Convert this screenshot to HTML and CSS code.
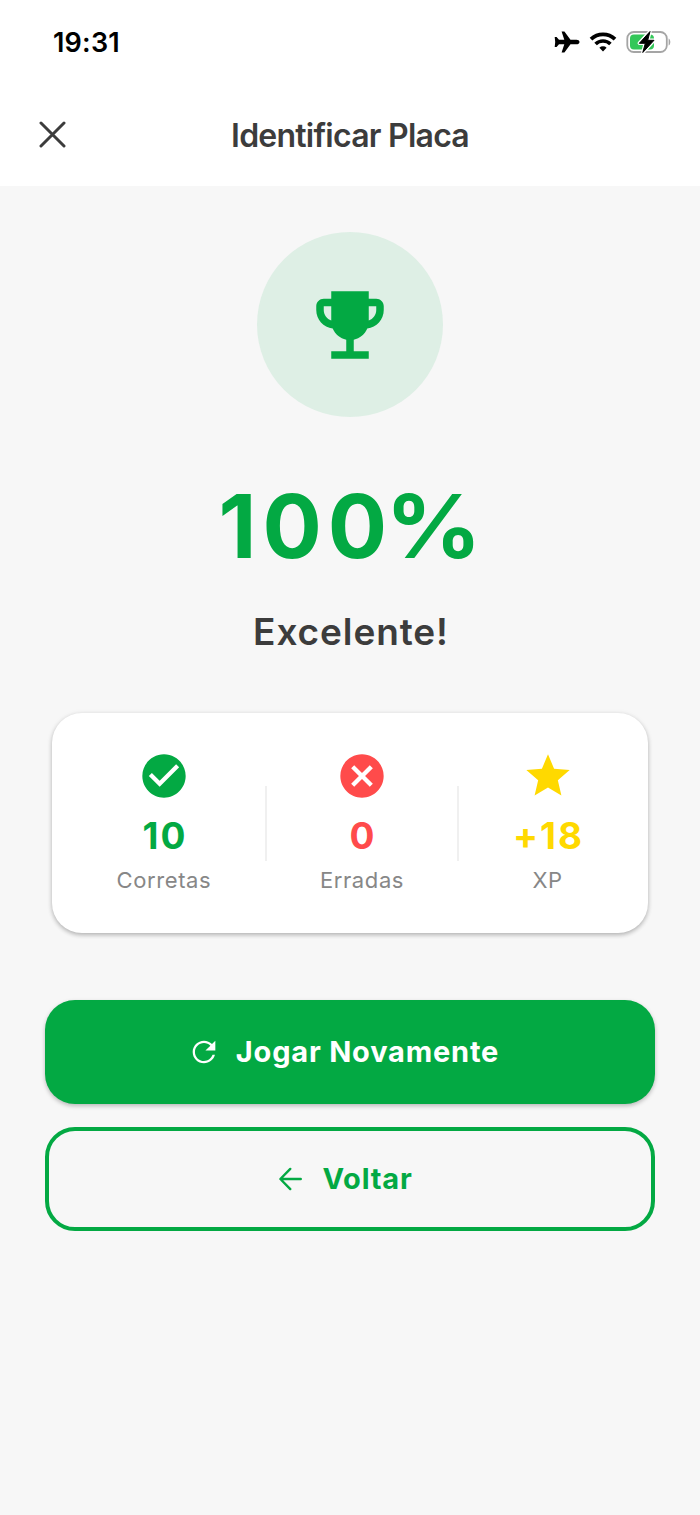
FILE: index.html
```html
<!DOCTYPE html>
<html lang="pt-BR">
<head>
    <meta charset="UTF-8">
    <meta name="viewport" content="width=device-width, initial-scale=1.0">
    <title>Identificar Placa</title>
    <link rel="stylesheet" href="styles.css">
</head>
<body>
    <div class="status-bar">
        <span class="time">19:31</span>
        <div class="status-icons">
            <svg width="26" height="24" viewBox="0 0 26 24">
                <path d="M25.500 12c0-1.400-1.500-2.300-3-2.300h-6L10.400 1.500H7.600L10.300 9.700H5L2.600 7H.7L1.200 12 .7 17h1.900L5 14.300h5.300L7.600 22.500h2.800l6.100-8.200h6c1.500 0 3-.9 3-2.300z"/>
            </svg>
            <svg width="28" height="20" viewBox="0 0 28 20" fill="none" stroke="#000">
                <path d="M2 7.200a17.200 17.200 0 0 1 24 0" stroke-width="3.800"/>
                <path d="M6.600 12a10.600 10.600 0 0 1 14.800 0" stroke-width="3.600"/>
                <path d="M14 19.500l-3.600-3.700a5.200 5.200 0 0 1 7.200 0z" fill="#000" stroke="none"/>
            </svg>
            <svg width="46" height="26" viewBox="0 0 46 26">
                <rect x="1.300" y="3" width="39.500" height="20" rx="6.500" fill="#fff" stroke="#a5a5a5" stroke-width="1.800"/>
                <path d="M42.600 9.500c2.300 1 2.300 6 0 7z" fill="#a5a5a5"/>
                <rect x="4" y="5.600" width="24" height="14.800" rx="4" fill="#34c759"/>
                <path d="M24 2.500L13.300 14.300h6L16.800 23.500 28 11.300h-6.300z" stroke="#fff" stroke-width="3.500" stroke-linejoin="round"/>
                <path d="M24 2.500L13.300 14.300h6L16.800 23.500 28 11.300h-6.300z" stroke="#000" stroke-linejoin="round"/>
            </svg>
        </div>
    </div>

    <header class="header">
        <svg class="close" width="28" height="28" viewBox="0 0 28 28">
            <path d="M3 2l23 23M26 2L3 25"/>
        </svg>
        <h1>Identificar Placa</h1>
    </header>

    <main class="result">
        <div class="trophy">
            <svg width="90" height="90" viewBox="0 0 24 24">
                <path d="M19 5h-2V3H7v2H5c-1.100 0-2 .9-2 2v1c0 2.550 1.920 4.630 4.390 4.940.63 1.500 1.980 2.630 3.610 2.960V19H7v2h10v-2h-4v-3.100c1.630-.33 2.980-1.460 3.610-2.960C19.080 12.630 21 10.550 21 8V7c0-1.100-.9-2-2-2zM5 8V7h2v3.820C5.840 10.400 5 9.300 5 8zm14 0c0 1.300-.84 2.400-2 2.820V7h2v1z"/>
            </svg>
        </div>
        <div class="percent">100<span class="sign">%</span></div>
        <div class="message">Excelente!</div>

        <div class="card">
            <div class="stat correct">
                <svg width="52" height="52" viewBox="0 0 24 24">
                    <path d="M12 2C6.480 2 2 6.480 2 12s4.480 10 10 10 10-4.480 10-10S17.520 2 12 2zm-2 15l-5-5 1.410-1.410L10 14.170l7.590-7.590L19 8l-9 9z"/>
                </svg>
                <span class="value">10</span>
                <span class="label">Corretas</span>
            </div>
            <div class="divider"></div>
            <div class="stat wrong">
                <svg width="52" height="52" viewBox="0 0 24 24">
                    <path d="M12 2C6.470 2 2 6.470 2 12s4.470 10 10 10 10-4.470 10-10S17.530 2 12 2zm5 13.590L15.590 17 12 13.410 8.410 17 7 15.590 10.590 12 7 8.410 8.410 7 12 10.590 15.590 7 17 8.410 13.410 12 17 15.590z"/>
                </svg>
                <span class="value">0</span>
                <span class="label">Erradas</span>
            </div>
            <div class="divider"></div>
            <div class="stat xp">
                <svg width="52" height="52" viewBox="0 0 24 24">
                    <path d="M12 17.270L18.180 21l-1.640-7.030L22 9.240l-7.190-.61L12 2 9.190 8.630 2 9.240l5.460 4.730L5.820 21z"/>
                </svg>
                <span class="value">+18</span>
                <span class="label">XP</span>
            </div>
        </div>

        <div class="actions">
            <button class="btn primary">
                <svg width="34" height="34" viewBox="0 0 24 24">
                    <path d="M17.650 6.350C16.200 4.900 14.210 4 12 4c-4.420 0-7.990 3.580-7.990 8s3.570 8 7.990 8c3.730 0 6.840-2.550 7.730-6h-1.700c-.95 2.600-3.240 4.400-6.030 4.400-3.550 0-6.400-2.850-6.400-6.400s2.850-6.400 6.400-6.400c1.770 0 3.360.73 4.500 1.900L13 11h7V4l-2.350 2.350z"/>
                </svg>
                <span>Jogar Novamente</span>
            </button>
            <button class="btn outlined">
                <svg class="arrow" width="34" height="34" viewBox="0 0 24 24">
                    <path d="M19.600 12H5.400M12.200 4.900L5.200 12l7 7.100"/>
                </svg>
                <span>Voltar</span>
            </button>
        </div>
    </main>
</body>
</html>
```

FILE: styles.css
```css
* {
    box-sizing: border-box;
}
body {
    margin: 0;
    min-height: 1515px;
    background: #f7f7f7;
    color: #3c3c3c;
    font-family: Inter, sans-serif;
}
svg {
    display: block;
    flex-shrink: 0;
}
.status-bar {
    display: flex;
    justify-content: space-between;
    align-items: center;
    height: 84px;
    padding: 0 28px 0 53px;
    background: #fff;
    color: #000;
}
.time {
    font-size: 27px;
    font-weight: 600;
    letter-spacing: 0.2px;
}
.status-icons {
    display: flex;
    align-items: center;
    gap: 9px;
}

/* Header */
.header {
    display: grid;
    grid-template-columns: 28px 1fr 28px;
    align-items: center;
    height: 102px;
    padding: 0 38px;
    background: #fff;
}
.close {
    fill: none;
    stroke: #3c3c3c;
    stroke-width: 3;
    stroke-linecap: round;
}
h1 {
    margin: 0;
    font-size: 32px;
    font-weight: 600;
    letter-spacing: -0.76px;
    text-align: center;
}

/* Result */
.result {
    display: flex;
    flex-direction: column;
    align-items: center;
    padding: 46px 45px 0;
}
.trophy {
    display: flex;
    align-items: center;
    justify-content: center;
    width: 186px;
    height: 185px;
    border-radius: 50%;
    background: #deefe5;
    fill: #03a943;
}
.percent {
    margin-top: 65px;
    padding-left: 7px;
    font-size: 88px;
    font-weight: 700;
    line-height: 88px;
    letter-spacing: 6px;
    color: #03a943;
}
.sign {
    display: inline-block;
    transform: scaleX(1.08);
    transform-origin: right;
}
.message {
    margin-top: 40px;
    padding-left: 2px;
    font-size: 37px;
    font-weight: 600;
    line-height: 44px;
    letter-spacing: 0.9px;
}

/* Stats card */
.card {
    display: flex;
    justify-content: space-around;
    align-items: center;
    width: 596px;
    height: 220px;
    margin-top: 59px;
    padding: 0 39px 0 38px;
    border-radius: 30px;
    background: #fff;
    box-shadow: 0 2px 4px rgba(0,0,0,0.24), 0 1px 6px rgba(0,0,0,0.07);
}
.stat {
    display: flex;
    flex-direction: column;
    align-items: center;
    width: 94px;
    padding-bottom: 2px;
}
.stat.wrong {
    width: 83px;
}
.stat.xp {
    width: 69px;
}
.value {
    margin-top: 12px;
    padding-left: 2px;
    font-size: 37px;
    font-weight: 700;
    line-height: 44px;
    letter-spacing: 2px;
}
.label {
    margin-top: 8px;
    font-size: 22px;
    line-height: 28px;
    letter-spacing: 0.6px;
    color: #878787;
}
.correct {
    color: #03a943;
    fill: #03a943;
}
.wrong {
    color: #ff4b4b;
    fill: #ff4b4b;
}
.xp {
    color: #ffd900;
    fill: #ffd900;
}
.divider {
    width: 2px;
    height: 75px;
    background: #f0f0f0;
}

/* Buttons */
.actions {
    display: flex;
    flex-direction: column;
    gap: 23px;
    width: 100%;
    margin-top: 67px;
}
.btn {
    display: flex;
    align-items: center;
    justify-content: center;
    gap: 15px;
    height: 104px;
    padding: 0 14px 0 0;
    border: none;
    border-radius: 30px;
    font-family: inherit;
    font-size: 29px;
    font-weight: 650;
    letter-spacing: 0.8px;
}
.btn span {
    padding-bottom: 1px;
}
.primary {
    background: #03a943;
    color: #fff;
    fill: #fff;
    box-shadow: 0 2px 4px rgba(0,0,0,0.25);
}
.outlined {
    border: 4px solid #03a943;
    background: transparent;
    color: #03a943;
}
.arrow {
    fill: none;
    stroke: #03a943;
    stroke-width: 1.7;
    stroke-linecap: round;
    stroke-linejoin: round;
}
```
